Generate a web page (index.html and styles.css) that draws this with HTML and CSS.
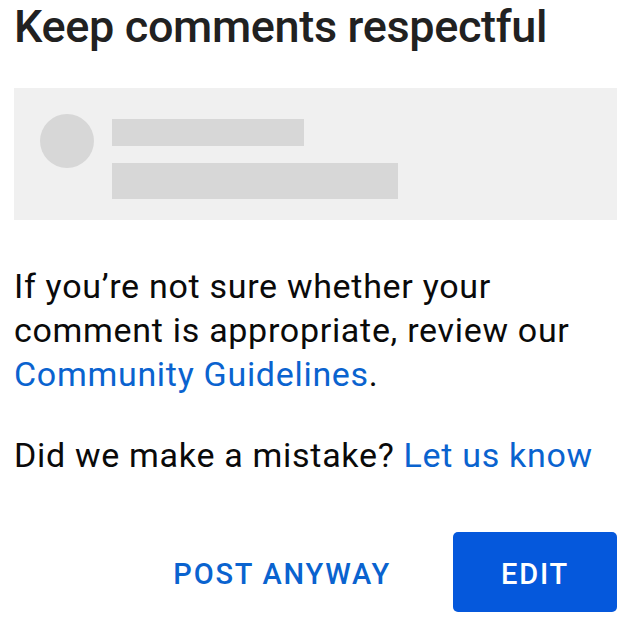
FILE: index.html
```html
<!DOCTYPE html>
<html lang="en">

<head>
    <meta charset="UTF-8">
    <meta name="viewport" content="width=device-width, initial-scale=1.0">
    <title>Keep comments respectful</title>
    <link rel="stylesheet" href="styles.css">
</head>

<body>
    <div class="dialog">
        <h1 class="dialog-title">Keep comments respectful</h1>

        <div class="preview">
            <div class="avatar"></div>
            <div class="lines">
                <div class="line line-short"></div>
                <div class="line line-long"></div>
            </div>
        </div>

        <p class="message">
            If you’re not sure whether your comment is appropriate, review our
            <a href="#" class="link">Community Guidelines</a>.
        </p>

        <p class="message">
            Did we make a mistake? <a href="#" class="link">Let us know</a>
        </p>

        <div class="actions">
            <button class="btn btn-text">POST ANYWAY</button>
            <button class="btn btn-filled">EDIT</button>
        </div>
    </div>
</body>

</html>
```

FILE: styles.css
```css
body {
    margin: 0;
    font-family: Roboto, "Noto Sans", Arial, sans-serif;
    background-color: #fff;
}

.dialog {
    padding: 0 8px 0 14px;
}

.dialog-title {
    margin: 0;
    font-size: 45px;
    line-height: 54px;
    font-weight: 500;
    letter-spacing: -0.35px;
    color: #212121;
}

.preview {
    margin-top: 34px;
    height: 132px;
    background-color: #f0f0f0;
    display: flex;
    align-items: flex-start;
    padding: 26px 0 0 26px;
    box-sizing: border-box;
    gap: 18px;
}

.avatar {
    width: 54px;
    height: 54px;
    border-radius: 50%;
    background-color: #d7d7d7;
}

.lines {
    display: flex;
    flex-direction: column;
    gap: 17px;
    padding-top: 5px;
}

.line {
    background-color: #d7d7d7;
}

.line-short {
    width: 192px;
    height: 27px;
}

.line-long {
    width: 286px;
    height: 36px;
}

.message {
    margin: 44px 0 0;
    font-size: 34px;
    line-height: 44px;
    letter-spacing: 0.7px;
    color: #0a0a0a;
}

.message + .message {
    margin-top: 37px;
}

.link {
    color: #0a63cf;
    text-decoration: none;
}

.actions {
    margin-top: 55px;
    display: flex;
    justify-content: flex-end;
    gap: 30px;
}

.btn {
    font-family: inherit;
    font-size: 29px;
    font-weight: 500;
    letter-spacing: 1.8px;
    border: none;
    border-radius: 5px;
    height: 80px;
    padding: 4px 32px 0;
    cursor: pointer;
}

.btn-text {
    background: none;
    color: #0a63cf;
}

.btn-filled {
    width: 164px;
    background-color: #0558dc;
    color: #fff;
}
```
